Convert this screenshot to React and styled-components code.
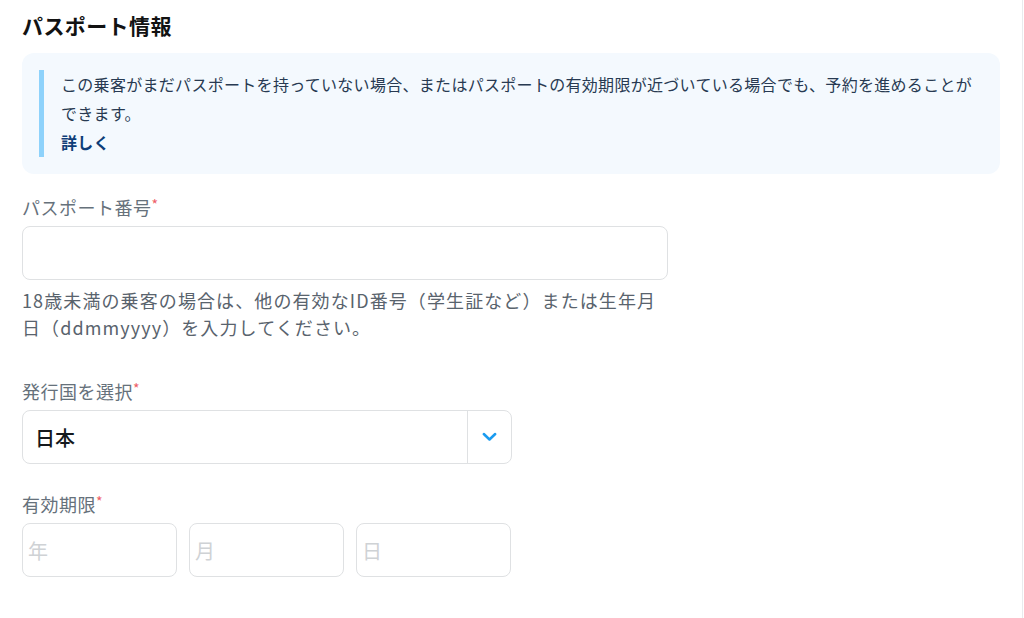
import React from 'react';
import styled, { createGlobalStyle } from 'styled-components';

const GlobalStyle = createGlobalStyle`
  html, body {
    margin: 0;
    padding: 0;
    background: #ffffff;
  }
  body {
    font-family: "Noto Sans CJK JP", "Noto Sans", sans-serif;
  }
`;

const Page = styled.div`
  width: 1023px;
  height: 618px;
  box-sizing: border-box;
  border-right: 1px solid #e9ebed;
  padding: 10px 22px 0 22px;
  overflow: hidden;
`;

const Title = styled.h2`
  margin: 0;
  font-size: 21px;
  line-height: 30px;
  letter-spacing: 0.4px;
  font-weight: 700;
  color: #121212;
`;

const Notice = styled.div`
  margin-top: 13px;
  background: #f4f9fe;
  border-radius: 12px;
  padding: 17px;
`;

const NoticeInner = styled.div`
  border-left: 5px solid #8ed2fb;
  padding-left: 17px;
  font-size: 16px;
  line-height: 29px;
  letter-spacing: 0.3px;
  color: #283a52;
`;

const MoreLink = styled.a`
  display: block;
  font-weight: 700;
  color: #0e3d78;
  text-decoration: none;
`;

const Field = styled.div`
  margin-top: ${p => p.$top}px;
  display: flex;
  flex-direction: column;
`;

const Label = styled.label`
  font-size: 18px;
  line-height: 26px;
  letter-spacing: 0.5px;
  color: #66717b;
  margin-bottom: 6px;
`;

const Required = styled.span`
  color: #ee5d66;
  font-size: 14px;
  vertical-align: top;
  line-height: 20px;
`;

const TextBox = styled.div`
  box-sizing: border-box;
  width: ${p => p.$width}px;
  height: 54px;
  border: 1px solid #dfe1e3;
  border-radius: 8px;
  background: #fff;
  display: flex;
  align-items: center;
  padding-left: ${p => p.$pad || 12}px;
  font-size: 20px;
  color: ${p => (p.$placeholder ? '#cfd2d5' : '#15191d')};
`;

const Help = styled.p`
  margin: 7px 0 0;
  font-size: 18px;
  line-height: 27px;
  letter-spacing: 1.1px;
  color: #59636d;
`;

const Select = styled.div`
  box-sizing: border-box;
  width: 490px;
  height: 54px;
  border: 1px solid #dfe1e3;
  border-radius: 8px;
  display: flex;
  align-items: stretch;
`;

const SelectValue = styled.div`
  flex: 1;
  display: flex;
  align-items: center;
  padding-left: 12px;
  font-size: 20px;
  font-weight: 500;
  color: #15191d;
`;

const SelectButton = styled.div`
  width: 43px;
  border-left: 1px solid #dfe1e3;
  display: flex;
  align-items: center;
  justify-content: center;
`;

const DateRow = styled.div`
  display: flex;
  gap: 12px;
`;

function Chevron() {
  return (
    <svg width="15" height="10" viewBox="0 0 15 10">
      <path d="M1.8 2 L7.5 7.5 L13.2 2" fill="none" stroke="#1a9bf0" strokeWidth="2.5" strokeLinecap="round" strokeLinejoin="round" />
    </svg>
  );
}

export default function App() {
  return (
    <Page>
      <GlobalStyle />
      <Title>パスポート情報</Title>
      <Notice>
        <NoticeInner>
          この乗客がまだパスポートを持っていない場合、またはパスポートの有効期限が近づいている場合でも、予約を進めることができます。
          <MoreLink href="#">詳しく</MoreLink>
        </NoticeInner>
      </Notice>

      <Field $top={20}>
        <Label>パスポート番号<Required>*</Required></Label>
        <TextBox $width={646} />
        <Help>
          18歳未満の乗客の場合は、他の有効なID番号（学生証など）または生年月<br />
          日（ddmmyyyy）を入力してください。
        </Help>
      </Field>

      <Field $top={37}>
        <Label>発行国を選択<Required>*</Required></Label>
        <Select>
          <SelectValue>日本</SelectValue>
          <SelectButton><Chevron /></SelectButton>
        </Select>
      </Field>

      <Field $top={27}>
        <Label>有効期限<Required>*</Required></Label>
        <DateRow>
          <TextBox $width={155} $pad={5} $placeholder>年</TextBox>
          <TextBox $width={155} $pad={5} $placeholder>月</TextBox>
          <TextBox $width={155} $pad={5} $placeholder>日</TextBox>
        </DateRow>
      </Field>
    </Page>
  );
}
